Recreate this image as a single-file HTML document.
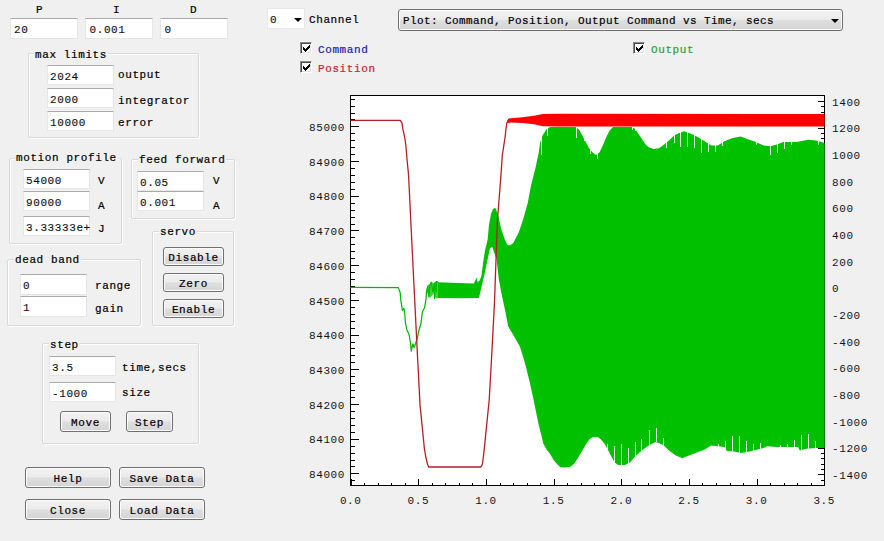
<!DOCTYPE html>
<html><head><meta charset="utf-8">
<style>
html,body{margin:0;padding:0;}
body{width:884px;height:541px;background:#f0f0f0;position:relative;overflow:hidden;font:11px/14px "Liberation Mono",monospace;letter-spacing:0.6px;color:#000;}
.t{position:absolute;white-space:pre;}
.b{-webkit-text-stroke:0.2px currentColor;}
.in{position:absolute;box-sizing:border-box;background:#fff;border:1px solid #e6e6e6;border-top-color:#ababab;}
.in span{position:absolute;left:2px;white-space:pre;-webkit-text-stroke:0.1px #000;color:#111;}
.gb{position:absolute;box-sizing:border-box;border:1px solid #d9d9d9;border-radius:2px;box-shadow:inset 1px 1px 0 #fff,1px 1px 0 #fff;}
.gt{position:absolute;white-space:pre;background:#f0f0f0;padding:0 1px;}
.btn{position:absolute;box-sizing:border-box;border:1px solid #707070;border-radius:3px;background:linear-gradient(#f2f2f2 0%,#ebebeb 47%,#dedede 53%,#d5d5d5 100%);box-shadow:inset 0 0 0 1px #fcfcfc;text-align:center;white-space:pre;padding-top:2px;}
.cb{position:absolute;box-sizing:border-box;width:12px;height:12px;background:#fff;border-top:1px solid #8a8a8a;border-left:1px solid #8a8a8a;border-right:1px solid #fff;border-bottom:1px solid #fff;box-shadow:inset 1px 1px 0 #4a4a4a,inset -1px -1px 0 #e2e2e2;}
.cb svg{position:absolute;left:0;top:0;}
svg text{font-family:"Liberation Mono",monospace;font-size:11px;letter-spacing:0.6px;}
</style></head><body>

<!-- PID -->
<div class="t b" style="left:36px;top:3px">P</div>
<div class="t b" style="left:113px;top:3px">I</div>
<div class="t b" style="left:190px;top:3px">D</div>
<div class="in" style="left:10px;top:18px;width:68px;height:21px"><span style="top:4px;left:3px">20</span></div>
<div class="in" style="left:85px;top:18px;width:68px;height:21px"><span style="top:4px;left:3.5px">0.001</span></div>
<div class="in" style="left:160px;top:18px;width:68px;height:21px"><span style="top:4px;left:3.5px">0</span></div>

<!-- max limits -->
<div class="gb" style="left:28px;top:53px;width:171px;height:85px"></div>
<div class="gt b" style="left:34px;top:48px">max limits</div>
<div class="in" style="left:47px;top:65px;width:67px;height:20px"><span style="top:4px">2024</span></div>
<div class="in" style="left:47px;top:88px;width:67px;height:20px"><span style="top:4px">2000</span></div>
<div class="in" style="left:47px;top:111px;width:67px;height:20px"><span style="top:4px">10000</span></div>
<div class="t b" style="left:118px;top:68px">output</div>
<div class="t b" style="left:118px;top:94px">integrator</div>
<div class="t b" style="left:118px;top:116px">error</div>

<!-- motion profile -->
<div class="gb" style="left:9px;top:158px;width:113px;height:86px"></div>
<div class="gt b" style="left:15px;top:151px">motion profile</div>
<div class="in" style="left:23px;top:169px;width:67px;height:20px"><span style="top:4px">54000</span></div>
<div class="in" style="left:23px;top:191px;width:67px;height:20px"><span style="top:4px">90000</span></div>
<div class="in" style="left:23px;top:216px;width:67px;height:20px"><span style="top:4px">3.33333e+</span></div>
<div class="t b" style="left:98px;top:174px">V</div>
<div class="t b" style="left:98px;top:199px">A</div>
<div class="t b" style="left:98px;top:222px">J</div>

<!-- feed forward -->
<div class="gb" style="left:131px;top:159px;width:104px;height:60px"></div>
<div class="gt b" style="left:138px;top:153px">feed forward</div>
<div class="in" style="left:137px;top:171px;width:67px;height:20px"><span style="top:4px">0.05</span></div>
<div class="in" style="left:137px;top:191px;width:67px;height:20px"><span style="top:4px">0.001</span></div>
<div class="t b" style="left:213px;top:174px">V</div>
<div class="t b" style="left:213px;top:199px">A</div>

<!-- servo -->
<div class="gb" style="left:152px;top:231px;width:82px;height:95px"></div>
<div class="gt b" style="left:159px;top:225px">servo</div>
<div class="btn b" style="left:163px;top:247px;width:61px;height:19px;line-height:17px">Disable</div>
<div class="btn b" style="left:163px;top:273px;width:61px;height:19px;line-height:17px">Zero</div>
<div class="btn b" style="left:163px;top:299px;width:61px;height:19px;line-height:17px">Enable</div>

<!-- dead band -->
<div class="gb" style="left:7px;top:259px;width:134px;height:67px"></div>
<div class="gt b" style="left:14px;top:253px">dead band</div>
<div class="in" style="left:20px;top:274px;width:67px;height:21px"><span style="top:4px">0</span></div>
<div class="in" style="left:20px;top:296px;width:67px;height:21px"><span style="top:4px">1</span></div>
<div class="t b" style="left:95px;top:279px">range</div>
<div class="t b" style="left:95px;top:302px">gain</div>

<!-- step -->
<div class="gb" style="left:42px;top:343px;width:157px;height:101px"></div>
<div class="gt b" style="left:49px;top:338px">step</div>
<div class="in" style="left:49px;top:356px;width:67px;height:20px"><span style="top:4px">3.5</span></div>
<div class="in" style="left:49px;top:382px;width:67px;height:20px"><span style="top:4px">-1000</span></div>
<div class="t b" style="left:122px;top:361px">time,secs</div>
<div class="t b" style="left:122px;top:386px">size</div>
<div class="btn b" style="left:60px;top:411px;width:51px;height:21px;line-height:19px">Move</div>
<div class="btn b" style="left:126px;top:411px;width:47px;height:21px;line-height:19px">Step</div>

<!-- bottom buttons -->
<div class="btn b" style="left:25px;top:467px;width:86px;height:21px;line-height:19px">Help</div>
<div class="btn b" style="left:119px;top:467px;width:86px;height:21px;line-height:19px">Save Data</div>
<div class="btn b" style="left:25px;top:499px;width:86px;height:21px;line-height:19px">Close</div>
<div class="btn b" style="left:119px;top:499px;width:86px;height:21px;line-height:19px">Load Data</div>

<!-- top right controls -->
<div class="in" style="left:267px;top:8px;width:38px;height:21px;border-color:#e8e8e8"><span style="top:4px">0</span>
<svg width="10" height="6" style="position:absolute;left:26px;top:9px"><path d="M0 0H8L4 4Z" fill="#000"/></svg></div>
<div class="t b" style="left:309px;top:13px">Channel</div>

<div class="btn" style="left:398px;top:9px;width:445px;height:22px;text-align:left;border-radius:3px"></div>
<div class="t b" style="left:403px;top:14px;letter-spacing:0.4px">Plot: Command, Position, Output Command vs Time, secs</div>
<svg width="10" height="6" style="position:absolute;left:831px;top:19px"><path d="M0 0H8L4 4Z" fill="#000"/></svg>

<div class="cb" style="left:300px;top:42px"><svg width="7" height="7" style="left:2px;top:2px" shape-rendering="crispEdges" fill="#000"><rect x="6" y="0" width="1" height="1"/><rect x="5" y="1" width="2" height="1"/><rect x="0" y="2" width="1" height="1"/><rect x="4" y="2" width="3" height="1"/><rect x="0" y="3" width="2" height="1"/><rect x="3" y="3" width="3" height="1"/><rect x="0" y="4" width="5" height="1"/><rect x="1" y="5" width="3" height="1"/><rect x="2" y="6" width="1" height="1"/></svg></div>
<div class="t b" style="left:318px;top:43px;color:#2020a8">Command</div>
<div class="cb" style="left:300px;top:61px"><svg width="7" height="7" style="left:2px;top:2px" shape-rendering="crispEdges" fill="#000"><rect x="6" y="0" width="1" height="1"/><rect x="5" y="1" width="2" height="1"/><rect x="0" y="2" width="1" height="1"/><rect x="4" y="2" width="3" height="1"/><rect x="0" y="3" width="2" height="1"/><rect x="3" y="3" width="3" height="1"/><rect x="0" y="4" width="5" height="1"/><rect x="1" y="5" width="3" height="1"/><rect x="2" y="6" width="1" height="1"/></svg></div>
<div class="t b" style="left:318px;top:62px;color:#cc2222">Position</div>
<div class="cb" style="left:633px;top:42px"><svg width="7" height="7" style="left:2px;top:2px" shape-rendering="crispEdges" fill="#000"><rect x="6" y="0" width="1" height="1"/><rect x="5" y="1" width="2" height="1"/><rect x="0" y="2" width="1" height="1"/><rect x="4" y="2" width="3" height="1"/><rect x="0" y="3" width="2" height="1"/><rect x="3" y="3" width="3" height="1"/><rect x="0" y="4" width="5" height="1"/><rect x="1" y="5" width="3" height="1"/><rect x="2" y="6" width="1" height="1"/></svg></div>
<div class="t b" style="left:651px;top:43px;color:#30a030">Output</div>

<!-- CHART -->
<svg id="chart" width="884" height="541" style="position:absolute;left:0;top:0" shape-rendering="crispEdges">
<rect x="350.5" y="95.5" width="474" height="390" fill="#fff"/>
<!--AXES--><g fill="#000"><rect x="350" y="95" width="475" height="1"/><rect x="350" y="485" width="475" height="1"/><rect x="350" y="95" width="1" height="391"/><rect x="824" y="95" width="1" height="391"/><rect x="351" y="99" width="4" height="1"/><rect x="351" y="106" width="4" height="1"/><rect x="351" y="113" width="4" height="1"/><rect x="351" y="119" width="4" height="1"/><rect x="351" y="126" width="8" height="1"/><rect x="351" y="133" width="4" height="1"/><rect x="351" y="140" width="4" height="1"/><rect x="351" y="147" width="4" height="1"/><rect x="351" y="154" width="4" height="1"/><rect x="351" y="161" width="8" height="1"/><rect x="351" y="168" width="4" height="1"/><rect x="351" y="175" width="4" height="1"/><rect x="351" y="182" width="4" height="1"/><rect x="351" y="189" width="4" height="1"/><rect x="351" y="196" width="8" height="1"/><rect x="351" y="203" width="4" height="1"/><rect x="351" y="210" width="4" height="1"/><rect x="351" y="217" width="4" height="1"/><rect x="351" y="224" width="4" height="1"/><rect x="351" y="230" width="8" height="1"/><rect x="351" y="237" width="4" height="1"/><rect x="351" y="244" width="4" height="1"/><rect x="351" y="251" width="4" height="1"/><rect x="351" y="258" width="4" height="1"/><rect x="351" y="265" width="8" height="1"/><rect x="351" y="272" width="4" height="1"/><rect x="351" y="279" width="4" height="1"/><rect x="351" y="286" width="4" height="1"/><rect x="351" y="293" width="4" height="1"/><rect x="351" y="300" width="8" height="1"/><rect x="351" y="307" width="4" height="1"/><rect x="351" y="314" width="4" height="1"/><rect x="351" y="321" width="4" height="1"/><rect x="351" y="328" width="4" height="1"/><rect x="351" y="335" width="8" height="1"/><rect x="351" y="342" width="4" height="1"/><rect x="351" y="348" width="4" height="1"/><rect x="351" y="355" width="4" height="1"/><rect x="351" y="362" width="4" height="1"/><rect x="351" y="369" width="8" height="1"/><rect x="351" y="376" width="4" height="1"/><rect x="351" y="383" width="4" height="1"/><rect x="351" y="390" width="4" height="1"/><rect x="351" y="397" width="4" height="1"/><rect x="351" y="404" width="8" height="1"/><rect x="351" y="411" width="4" height="1"/><rect x="351" y="418" width="4" height="1"/><rect x="351" y="425" width="4" height="1"/><rect x="351" y="432" width="4" height="1"/><rect x="351" y="439" width="8" height="1"/><rect x="351" y="446" width="4" height="1"/><rect x="351" y="453" width="4" height="1"/><rect x="351" y="460" width="4" height="1"/><rect x="351" y="466" width="4" height="1"/><rect x="351" y="473" width="8" height="1"/><rect x="351" y="480" width="4" height="1"/><rect x="818" y="101" width="6" height="1"/><rect x="821" y="106" width="3" height="1"/><rect x="821" y="112" width="3" height="1"/><rect x="821" y="117" width="3" height="1"/><rect x="821" y="122" width="3" height="1"/><rect x="818" y="128" width="6" height="1"/><rect x="821" y="133" width="3" height="1"/><rect x="821" y="138" width="3" height="1"/><rect x="821" y="144" width="3" height="1"/><rect x="821" y="149" width="3" height="1"/><rect x="818" y="154" width="6" height="1"/><rect x="821" y="160" width="3" height="1"/><rect x="821" y="165" width="3" height="1"/><rect x="821" y="170" width="3" height="1"/><rect x="821" y="176" width="3" height="1"/><rect x="818" y="181" width="6" height="1"/><rect x="821" y="186" width="3" height="1"/><rect x="821" y="192" width="3" height="1"/><rect x="821" y="197" width="3" height="1"/><rect x="821" y="202" width="3" height="1"/><rect x="818" y="208" width="6" height="1"/><rect x="821" y="213" width="3" height="1"/><rect x="821" y="218" width="3" height="1"/><rect x="821" y="224" width="3" height="1"/><rect x="821" y="229" width="3" height="1"/><rect x="818" y="234" width="6" height="1"/><rect x="821" y="240" width="3" height="1"/><rect x="821" y="245" width="3" height="1"/><rect x="821" y="250" width="3" height="1"/><rect x="821" y="256" width="3" height="1"/><rect x="818" y="261" width="6" height="1"/><rect x="821" y="266" width="3" height="1"/><rect x="821" y="272" width="3" height="1"/><rect x="821" y="277" width="3" height="1"/><rect x="821" y="282" width="3" height="1"/><rect x="818" y="288" width="6" height="1"/><rect x="821" y="293" width="3" height="1"/><rect x="821" y="298" width="3" height="1"/><rect x="821" y="304" width="3" height="1"/><rect x="821" y="309" width="3" height="1"/><rect x="818" y="314" width="6" height="1"/><rect x="821" y="320" width="3" height="1"/><rect x="821" y="325" width="3" height="1"/><rect x="821" y="330" width="3" height="1"/><rect x="821" y="336" width="3" height="1"/><rect x="818" y="341" width="6" height="1"/><rect x="821" y="346" width="3" height="1"/><rect x="821" y="352" width="3" height="1"/><rect x="821" y="357" width="3" height="1"/><rect x="821" y="362" width="3" height="1"/><rect x="818" y="368" width="6" height="1"/><rect x="821" y="373" width="3" height="1"/><rect x="821" y="378" width="3" height="1"/><rect x="821" y="384" width="3" height="1"/><rect x="821" y="389" width="3" height="1"/><rect x="818" y="394" width="6" height="1"/><rect x="821" y="400" width="3" height="1"/><rect x="821" y="405" width="3" height="1"/><rect x="821" y="410" width="3" height="1"/><rect x="821" y="416" width="3" height="1"/><rect x="818" y="421" width="6" height="1"/><rect x="821" y="426" width="3" height="1"/><rect x="821" y="432" width="3" height="1"/><rect x="821" y="437" width="3" height="1"/><rect x="821" y="442" width="3" height="1"/><rect x="818" y="448" width="6" height="1"/><rect x="821" y="453" width="3" height="1"/><rect x="821" y="458" width="3" height="1"/><rect x="821" y="464" width="3" height="1"/><rect x="821" y="469" width="3" height="1"/><rect x="818" y="474" width="6" height="1"/><rect x="821" y="480" width="3" height="1"/><rect x="351" y="479" width="1" height="6"/><rect x="364" y="483" width="1" height="2"/><rect x="378" y="483" width="1" height="2"/><rect x="391" y="483" width="1" height="2"/><rect x="405" y="483" width="1" height="2"/><rect x="418" y="479" width="1" height="6"/><rect x="432" y="483" width="1" height="2"/><rect x="445" y="483" width="1" height="2"/><rect x="459" y="483" width="1" height="2"/><rect x="472" y="483" width="1" height="2"/><rect x="486" y="479" width="1" height="6"/><rect x="500" y="483" width="1" height="2"/><rect x="513" y="483" width="1" height="2"/><rect x="527" y="483" width="1" height="2"/><rect x="540" y="483" width="1" height="2"/><rect x="554" y="479" width="1" height="6"/><rect x="567" y="483" width="1" height="2"/><rect x="581" y="483" width="1" height="2"/><rect x="594" y="483" width="1" height="2"/><rect x="608" y="483" width="1" height="2"/><rect x="621" y="479" width="1" height="6"/><rect x="635" y="483" width="1" height="2"/><rect x="648" y="483" width="1" height="2"/><rect x="662" y="483" width="1" height="2"/><rect x="675" y="483" width="1" height="2"/><rect x="689" y="479" width="1" height="6"/><rect x="702" y="483" width="1" height="2"/><rect x="716" y="483" width="1" height="2"/><rect x="730" y="483" width="1" height="2"/><rect x="743" y="483" width="1" height="2"/><rect x="757" y="479" width="1" height="6"/><rect x="770" y="483" width="1" height="2"/><rect x="784" y="483" width="1" height="2"/><rect x="797" y="483" width="1" height="2"/><rect x="811" y="483" width="1" height="2"/><rect x="824" y="479" width="1" height="6"/></g><g fill="#141414" shape-rendering="auto"><text x="345" y="131.0" text-anchor="end">85000</text><text x="345" y="165.7" text-anchor="end">84900</text><text x="345" y="200.4" text-anchor="end">84800</text><text x="345" y="235.1" text-anchor="end">84700</text><text x="345" y="269.8" text-anchor="end">84600</text><text x="345" y="304.5" text-anchor="end">84500</text><text x="345" y="339.2" text-anchor="end">84400</text><text x="345" y="373.9" text-anchor="end">84300</text><text x="345" y="408.6" text-anchor="end">84200</text><text x="345" y="443.3" text-anchor="end">84100</text><text x="345" y="478.0" text-anchor="end">84000</text><text x="832" y="105.6">1400</text><text x="832" y="132.2">1200</text><text x="832" y="158.9">1000</text><text x="832" y="185.6">800</text><text x="832" y="212.2">600</text><text x="832" y="238.9">400</text><text x="832" y="265.5">200</text><text x="832" y="292.2">0</text><text x="832" y="318.9">-200</text><text x="832" y="345.5">-400</text><text x="832" y="372.2">-600</text><text x="832" y="398.8">-800</text><text x="832" y="425.5">-1000</text><text x="832" y="452.2">-1200</text><text x="832" y="478.8">-1400</text><text x="350.7" y="503.8" text-anchor="middle">0.0</text><text x="418.4" y="503.8" text-anchor="middle">0.5</text><text x="486.0" y="503.8" text-anchor="middle">1.0</text><text x="553.6" y="503.8" text-anchor="middle">1.5</text><text x="621.3" y="503.8" text-anchor="middle">2.0</text><text x="689.0" y="503.8" text-anchor="middle">2.5</text><text x="756.6" y="503.8" text-anchor="middle">3.0</text><text x="824.2" y="503.8" text-anchor="middle">3.5</text></g>
<!--DATA--><g shape-rendering="auto"><polyline points="350.5,287.4 398.3,287.6 400.2,292.8 400.9,300.9 401.7,306.0 402.4,310.5 403.9,308.3 404.6,312.0 405.4,322.3 406.8,329.7 409.0,334.2 410.5,343.0 411.3,351.2 412.8,343.8 414.2,347.5 415.7,343.0 417.2,338.6 418.7,331.2 420.9,323.8 422.4,312.0 424.6,307.5 426.1,298.7 426.4,292.4 427.7,286.3 429.0,297.2 429.8,285.4 431.2,282.4 432.7,291.3 434.2,283.9 434.5,298.5 435.2,282.4 436.2,292.0 436.5,281.5 437.9,282.0" fill="none" stroke="#00b800" stroke-width="1.25" stroke-linejoin="round"/><polygon points="438.0,282.2 473.9,283.4 476.6,277.5 477.5,282.0 479.3,281.0 481.3,276.8 483.3,261.5 484.9,251.0 487.7,239.3 489.0,224.5 491.0,214.0 493.0,209.0 495.3,207.8 498.0,214.4 501.1,228.6 503.3,234.9 505.2,240.8 507.8,245.3 510.3,245.3 513.3,243.1 518.9,232.0 523.3,218.7 527.7,203.2 531.0,185.5 535.5,167.7 538.8,152.2 540.0,143.1 542.5,135.5 546.8,128.7 550.2,127.0 575.6,127.0 579.0,129.5 582.4,135.5 585.8,142.2 589.2,148.2 592.6,152.4 596.0,155.0 599.4,152.4 602.8,145.6 606.2,137.2 609.6,130.4 613.0,127.0 631.6,127.0 635.0,128.7 638.4,133.8 641.8,138.8 645.2,143.9 648.6,147.3 653.7,149.0 658.8,148.2 663.9,144.8 669.0,140.5 674.1,135.5 679.1,132.9 684.2,131.2 691.6,133.9 698.1,137.2 704.7,141.3 711.2,145.4 717.8,145.4 724.4,141.3 732.6,138.0 740.8,136.4 747.3,138.9 753.9,141.3 763.7,145.4 770.3,146.2 776.8,144.6 783.4,142.1 796.5,142.1 808.0,139.7 816.2,140.5 824.6,143.0 824.6,448.0 816.2,448.0 806.4,448.8 799.8,450.5 798.2,447.1 776.8,447.1 767.0,446.3 763.7,448.0 760.4,448.8 753.9,450.4 747.3,452.1 740.8,452.9 734.2,451.6 726.8,450.9 724.4,447.1 717.8,446.3 711.2,445.5 704.7,449.6 698.1,452.1 691.6,454.5 685.0,457.0 682.5,458.2 675.8,455.6 669.0,450.5 663.9,445.5 658.8,442.9 655.4,442.1 648.6,445.5 641.8,450.5 635.0,456.5 630.0,462.4 624.8,465.0 618.1,465.0 614.7,462.4 611.3,456.5 607.9,449.7 604.5,443.8 601.1,439.5 597.7,437.0 592.6,437.0 589.2,439.5 585.8,444.6 582.4,450.5 577.3,459.0 573.9,464.1 570.5,466.7 565.5,467.5 560.4,467.2 557.0,464.1 553.6,459.9 550.2,454.0 546.8,449.7 543.4,443.8 541.5,436.0 538.3,423.3 535.0,406.7 530.0,383.3 525.0,363.3 520.0,346.7 513.3,335.0 508.3,326.7 505.0,310.0 502.2,297.0 498.8,279.3 496.6,259.3 492.2,247.1 490.0,248.2 484.4,274.8 478.9,298.0 460.0,298.2 438.0,298.0" fill="#00c000"/><polygon points="426.2,292.0 427.5,285.5 429.5,284.0 431.5,281.5 433.5,283.5 435.5,281.5 438.2,282.0 438.2,298.0 435.5,298.5 434.0,293.0 432.0,296.0 430.0,297.5 428.0,294.0" fill="#00c000" opacity="0.75"/><g fill="#f4fff4" opacity="0.9" shape-rendering="crispEdges"><rect x="607" y="444" width="1" height="5"/><rect x="614" y="446" width="1" height="17"/><rect x="621" y="444" width="1" height="22"/><rect x="628" y="448" width="1" height="16"/><rect x="635" y="442" width="1" height="15"/><rect x="641" y="439" width="1" height="12"/><rect x="649" y="430" width="1" height="16"/><rect x="656" y="428" width="1" height="14"/><rect x="663" y="438" width="1" height="8"/><rect x="718" y="444" width="1" height="3"/><rect x="725" y="441" width="1" height="8"/><rect x="732" y="436" width="1" height="15"/><rect x="739" y="436" width="1" height="17"/><rect x="746" y="441" width="1" height="11"/><rect x="753" y="444" width="1" height="7"/><rect x="760" y="443" width="1" height="6"/><rect x="780" y="445" width="1" height="3"/><rect x="787" y="444" width="1" height="4"/><rect x="794" y="440" width="1" height="8"/><rect x="801" y="435" width="1" height="16"/><rect x="808" y="434" width="1" height="15"/><rect x="815" y="441" width="1" height="8"/><rect x="541" y="137" width="1" height="18"/><rect x="547" y="128" width="1" height="8"/><rect x="576" y="127" width="1" height="11"/><rect x="584" y="138" width="1" height="3"/><rect x="590" y="150" width="1" height="4"/><rect x="597" y="153" width="1" height="6"/><rect x="632" y="127" width="1" height="3"/><rect x="635" y="128" width="1" height="3"/><rect x="666" y="142" width="1" height="6"/><rect x="674" y="135" width="1" height="8"/><rect x="680" y="132" width="1" height="15"/><rect x="687" y="132" width="1" height="15"/><rect x="694" y="135" width="1" height="13"/><rect x="701" y="139" width="1" height="14"/><rect x="708" y="143" width="1" height="9"/><rect x="715" y="145" width="1" height="7"/><rect x="722" y="142" width="1" height="4"/><rect x="756" y="142" width="1" height="3"/><rect x="770" y="146" width="1" height="9"/><rect x="777" y="144" width="1" height="9"/><rect x="784" y="142" width="1" height="7"/><rect x="791" y="142" width="1" height="3"/><rect x="818" y="141" width="1" height="4"/></g><polyline points="350.5,120.4 400.3,120.4 401.9,122.9 402.9,129.4 404.0,133.9 405.3,141.0 406.2,148.8 407.1,160.5 408.4,173.4 408.8,180.0 413.8,282.0 417.7,360.0 420.0,404.4 424.4,448.7 426.0,458.0 427.5,464.0 428.7,467.0 481.0,467.0 482.5,464.0 484.3,448.7 489.2,400.0 491.3,363.0 494.5,302.0 497.4,220.7 500.6,180.0 502.3,155.5 505.1,137.0 506.0,128.8 506.8,123.0 508.5,119.5 511.0,118.8" fill="none" stroke="#b51e26" stroke-width="1.3" stroke-linejoin="round"/><polygon points="508.5,119.1 511.3,118.3 522.6,117.2 533.9,115.7 543.0,114.0 556.6,113.8 824.6,113.9 824.6,126.5 600.0,126.4 556.6,126.5 543.0,126.3 533.9,124.2 522.6,122.9 511.3,122.5 506.8,123.1" fill="#ff0000"/></g>
</svg>

</body></html>
